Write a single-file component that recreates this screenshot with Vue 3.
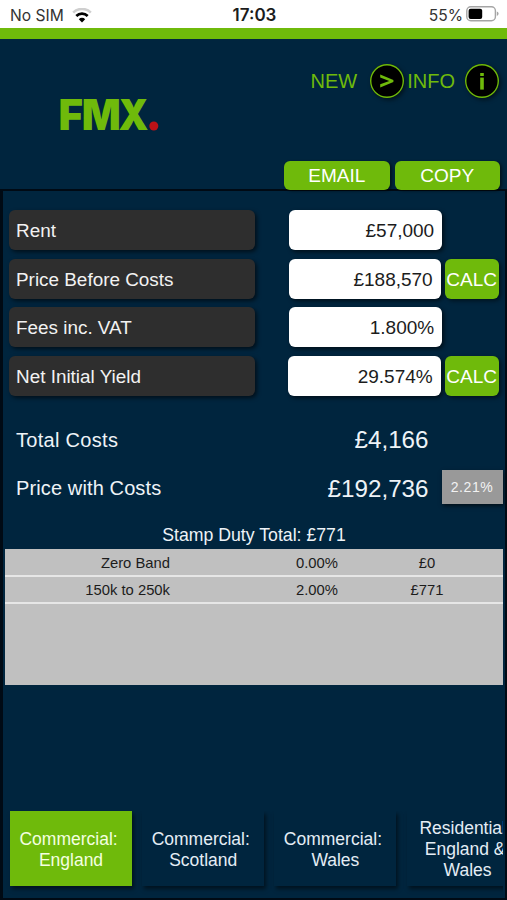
<script setup>
import { ref } from 'vue';

const fields = ref([
  { name: 'rent', label: 'Rent', value: '£57,000', calc: false },
  { name: 'price', label: 'Price Before Costs', value: '£188,570', calc: true },
  { name: 'fees', label: 'Fees inc. VAT', value: '1.800%', calc: false },
  { name: 'yield', label: 'Net Initial Yield', value: '29.574%', calc: true }
]);

const bands = [
  { name: 'Zero Band', rate: '0.00%', amount: '£0' },
  { name: '150k to 250k', rate: '2.00%', amount: '£771' }
];

// the space before each line break is kept by white-space: pre
const tabs = [
  'Commercial: \nEngland',
  'Commercial: \nScotland',
  'Commercial: \nWales',
  'Residential: \nEngland & \nWales'
];

const activeTab = ref(0);
</script>

<template>
  <div class="app">

    <!-- status bar -->
    <div class="status">
      <div class="status-left">
        <span>No SIM</span>
        <svg class="wifi" width="20" height="15" viewBox="0 0 20 15">
          <path d="M1.2 4.6 A12.6 12.6 0 0 1 18.8 4.6" fill="none" stroke="#cfcfcf" stroke-width="2.7" />
          <path d="M4.3 8 A8.2 8.2 0 0 1 15.7 8" fill="none" stroke="#000" stroke-width="2.7" />
          <path d="M10 14.4 L6.8 11.2 A4.5 4.5 0 0 1 13.2 11.2 Z" fill="#000" />
        </svg>
      </div>
      <div class="status-time">17:03</div>
      <div class="status-right">
        <span>55%</span>
        <svg width="33" height="16" viewBox="0 0 33 16">
          <rect x="0.8" y="0.8" width="28.6" height="14" rx="4" fill="#fff" stroke="#a5a5a5" stroke-width="1.4" />
          <rect x="2.6" y="2.7" width="13.6" height="10.2" rx="2" fill="#000" />
          <path d="M30.8 5.6 Q32.6 6.2 32.6 7.8 Q32.6 9.4 30.8 10 Z" fill="#a5a5a5" />
        </svg>
      </div>
    </div>

    <div class="stripe"></div>

    <header class="header">
      <svg class="logo" width="110" height="60" viewBox="0 0 110 60">
        <text y="44" class="logo-text">
          <tspan x="-1.6" textLength="24.5" lengthAdjust="spacingAndGlyphs">F</tspan><tspan x="21.8" textLength="39" lengthAdjust="spacingAndGlyphs">M</tspan><tspan x="58.6" textLength="30" lengthAdjust="spacingAndGlyphs">X</tspan>
        </text>
        <circle cx="93.8" cy="40" r="4.5" fill="#bd1217" />
      </svg>

      <div class="header-right">
        <div class="links">
          <span class="link-new">NEW</span>
          <button class="round">
            <svg width="34" height="34" viewBox="0 0 34 34">
              <path d="M10.2 10.4 L23.4 15.9 V18.1 L10.2 23.4 V20.3 L19.3 16.9 L10.2 13.4 Z" fill="#6fba0b" />
            </svg>
          </button>
          <span class="link-info">INFO</span>
          <button class="round">
            <svg width="34" height="34" viewBox="0 0 34 34">
              <rect x="15.2" y="9" width="3.6" height="3" fill="#6fba0b" />
              <rect x="15.2" y="13.6" width="3.6" height="12" fill="#6fba0b" />
            </svg>
          </button>
        </div>
        <div class="actions">
          <button class="action">EMAIL</button>
          <button class="action">COPY</button>
        </div>
      </div>
    </header>

    <main class="panel">
      <div class="fields">
        <div v-for="field in fields" :key="field.name" class="field">
          <label class="field-label" :for="field.name">{{ field.label }}</label>
          <input class="field-input" :class="field.name" :id="field.name" v-model="field.value" type="text" />
          <button v-if="field.calc" class="calc">CALC</button>
        </div>
      </div>

      <div class="total">
        <span class="total-label">Total Costs</span>
        <span class="total-value">£4,166</span>
      </div>
      <div class="total">
        <span class="total-label">Price with Costs</span>
        <span class="total-value">£192,736</span>
        <span class="percent">2.21%</span>
      </div>

      <div class="duty">Stamp Duty Total: £771</div>
      <div class="bands">
        <div v-for="band in bands" :key="band.name" class="band">
          <span class="band-name">{{ band.name }}</span>
          <span>{{ band.rate }}</span>
          <span>{{ band.amount }}</span>
        </div>
      </div>

      <nav class="tabs">
        <button
            v-for="(tab, index) in tabs"
            :key="index"
            class="tab"
            :class="{ active: activeTab === index }"
            @click="activeTab = index"
        >{{ tab }}</button>
      </nav>
    </main>

  </div>
</template>

<style>
body {
  margin: 0;
  background: #00253e;
}
</style>

<style scoped>
.app {
  display: flex;
  flex-direction: column;
  width: 507px;
  height: 900px;
  overflow: hidden;
  background: #00253e;
  font-family: "Liberation Sans", Arial, sans-serif;
  box-sizing: border-box;
}

.app * {
  box-sizing: border-box;
}

button {
  border: none;
  padding: 0;
  margin: 0;
  font-family: inherit;
  cursor: pointer;
}

.status {
  display: grid;
  grid-template-columns: 1fr 60px 1fr;
  align-items: center;
  height: 28px;
  flex: none;
  padding: 2px 8px 0 10px;
  background: #fff;
  color: #333;
  font-family: Inter, sans-serif;
  font-size: 15.6px;
}

.status-left,
.status-right {
  display: flex;
  align-items: center;
}

.status-left {
  gap: 8px;
}

.status-right {
  justify-content: flex-end;
  gap: 3px;
}

.status-right svg {
  margin-top: -2px;
}

.status-time {
  text-align: center;
  font-weight: 600;
  color: #1c1c1c;
  font-size: 17px;
}

.stripe {
  height: 11px;
  flex: none;
  background: #6fba0b;
}

.header {
  display: flex;
  justify-content: space-between;
  height: 151px;
  flex: none;
  padding: 25px 7px 0 60px;
}

.logo {
  margin-top: 22px;
  overflow: visible;
}

.logo-text {
  font-family: Inter, sans-serif;
  font-weight: 900;
  font-size: 43px;
  fill: #6fba0b;
}

.header-right {
  display: flex;
  flex-direction: column;
  justify-content: space-between;
}

.links {
  display: flex;
  align-items: center;
  justify-content: flex-end;
  padding-right: 1px;
  color: #6fba0b;
  font-size: 20px;
}

.link-new {
  margin-right: 13px;
}

.link-info {
  margin: 0 10px 0 3px;
}

.round {
  width: 34px;
  height: 34px;
  border-radius: 50%;
  background: #000;
  box-shadow: inset 0 0 0 1.4px #6fba0b, 2px 2px 4px rgba(0, 0, 0, 0.5);
}

.round svg {
  display: block;
}

/* sits over the top border of the panel */
.actions {
  display: flex;
  gap: 5px;
  position: relative;
  z-index: 1;
}

.action {
  width: 105.5px;
  height: 29px;
  border-radius: 6px;
  background: #6fba0b;
  color: #fff;
  font-size: 19px;
  box-shadow: 2px 1px 3px rgba(0, 0, 0, 0.5);
}

.panel {
  flex: 1;
  display: flex;
  flex-direction: column;
  margin-top: -1px;
  border: 2px solid #000a14;
  border-left-width: 3px;
  overflow: hidden;
}

.fields {
  display: flex;
  flex-direction: column;
  gap: 8.4px;
  padding: 19px 0 0 6.2px;
}

.field {
  display: flex;
  align-items: center;
  height: 40.2px;
}

.field-label {
  width: 245.5px;
  height: 100%;
  padding-left: 6.8px;
  margin-right: 34.5px;
  border-radius: 6px;
  background: #2e2e2e;
  color: #f2f2f2;
  font-size: 18.9px;
  line-height: 42px;
  box-shadow: 2px 2px 4px rgba(0, 0, 0, 0.6);
}

.field-input {
  width: 153px;
  height: 100%;
  padding: 1px 8px 0 0;
  border: none;
  border-radius: 6px;
  background: #fff;
  color: #1c1c1c;
  font-family: inherit;
  font-size: 19px;
  text-align: right;
  box-shadow: 2px 2px 4px rgba(0, 0, 0, 0.6);
}

.field-input.price {
  width: 151.5px;
  padding-top: 2px;
}

.field-input.yield {
  width: 153px;
  padding-top: 2px;
  margin-left: -1.5px;
}

.calc {
  width: 54px;
  height: 100%;
  padding-top: 2px;
  margin-left: 4px;
  border-radius: 6px;
  background: #6fba0b;
  color: #fff;
  font-size: 19px;
  box-shadow: 2px 2px 4px rgba(0, 0, 0, 0.5);
}

.total {
  display: flex;
  align-items: center;
  height: 48.5px;
  padding-left: 13px;
  color: #eef3f7;
  font-size: 20px;
}

.fields + .total {
  margin-top: 20px;
}

.total-label {
  width: 200px;
  letter-spacing: 0.12px;
}

.fields + .total .total-label {
  letter-spacing: 0.3px;
}

.total-value {
  width: 212.5px;
  font-size: 24.2px;
  text-align: right;
}

.percent {
  width: 61px;
  height: 34px;
  margin: -3px 0 0 13px;
  background: #999;
  color: #f2f2f2;
  font-size: 14px;
  letter-spacing: 0.6px;
  line-height: 35px;
  text-align: center;
  box-shadow: 1px 2px 4px rgba(0, 0, 0, 0.6);
}

.duty {
  height: 36px;
  padding-top: 12px;
  color: #eef3f7;
  font-size: 17.7px;
  text-align: center;
}

.bands {
  width: 498px;
  height: 136px;
  margin-left: 2px;
  background: #c0c0c0;
}

.band {
  display: grid;
  grid-template-columns: 257px 110px 110px;
  height: 27px;
  border-bottom: 2px solid #e6e6e6;
  color: #1c1c1c;
  font-size: 14.8px;
  line-height: 27px;
  text-align: center;
}

.band:first-child {
  height: 28px;
  line-height: 29px;
}

.band-name {
  padding-right: 92px;
  text-align: right;
}

.tabs {
  display: flex;
  gap: 10.2px;
  width: 500px;
  margin-top: auto;
  padding: 0 0 12px 7px;
  overflow: hidden;
}

.tab {
  flex: none;
  width: 122px;
  height: 75px;
  padding-top: 2px;
  background: #00253e;
  color: #e4edf5;
  font-size: 17.5px;
  line-height: 21px;
  white-space: pre;
  box-shadow: 2px 3px 4px rgba(0, 0, 0, 0.5);
}

.tab.active {
  background: #6fba0b;
  color: #f4ffe0;
}
</style>
